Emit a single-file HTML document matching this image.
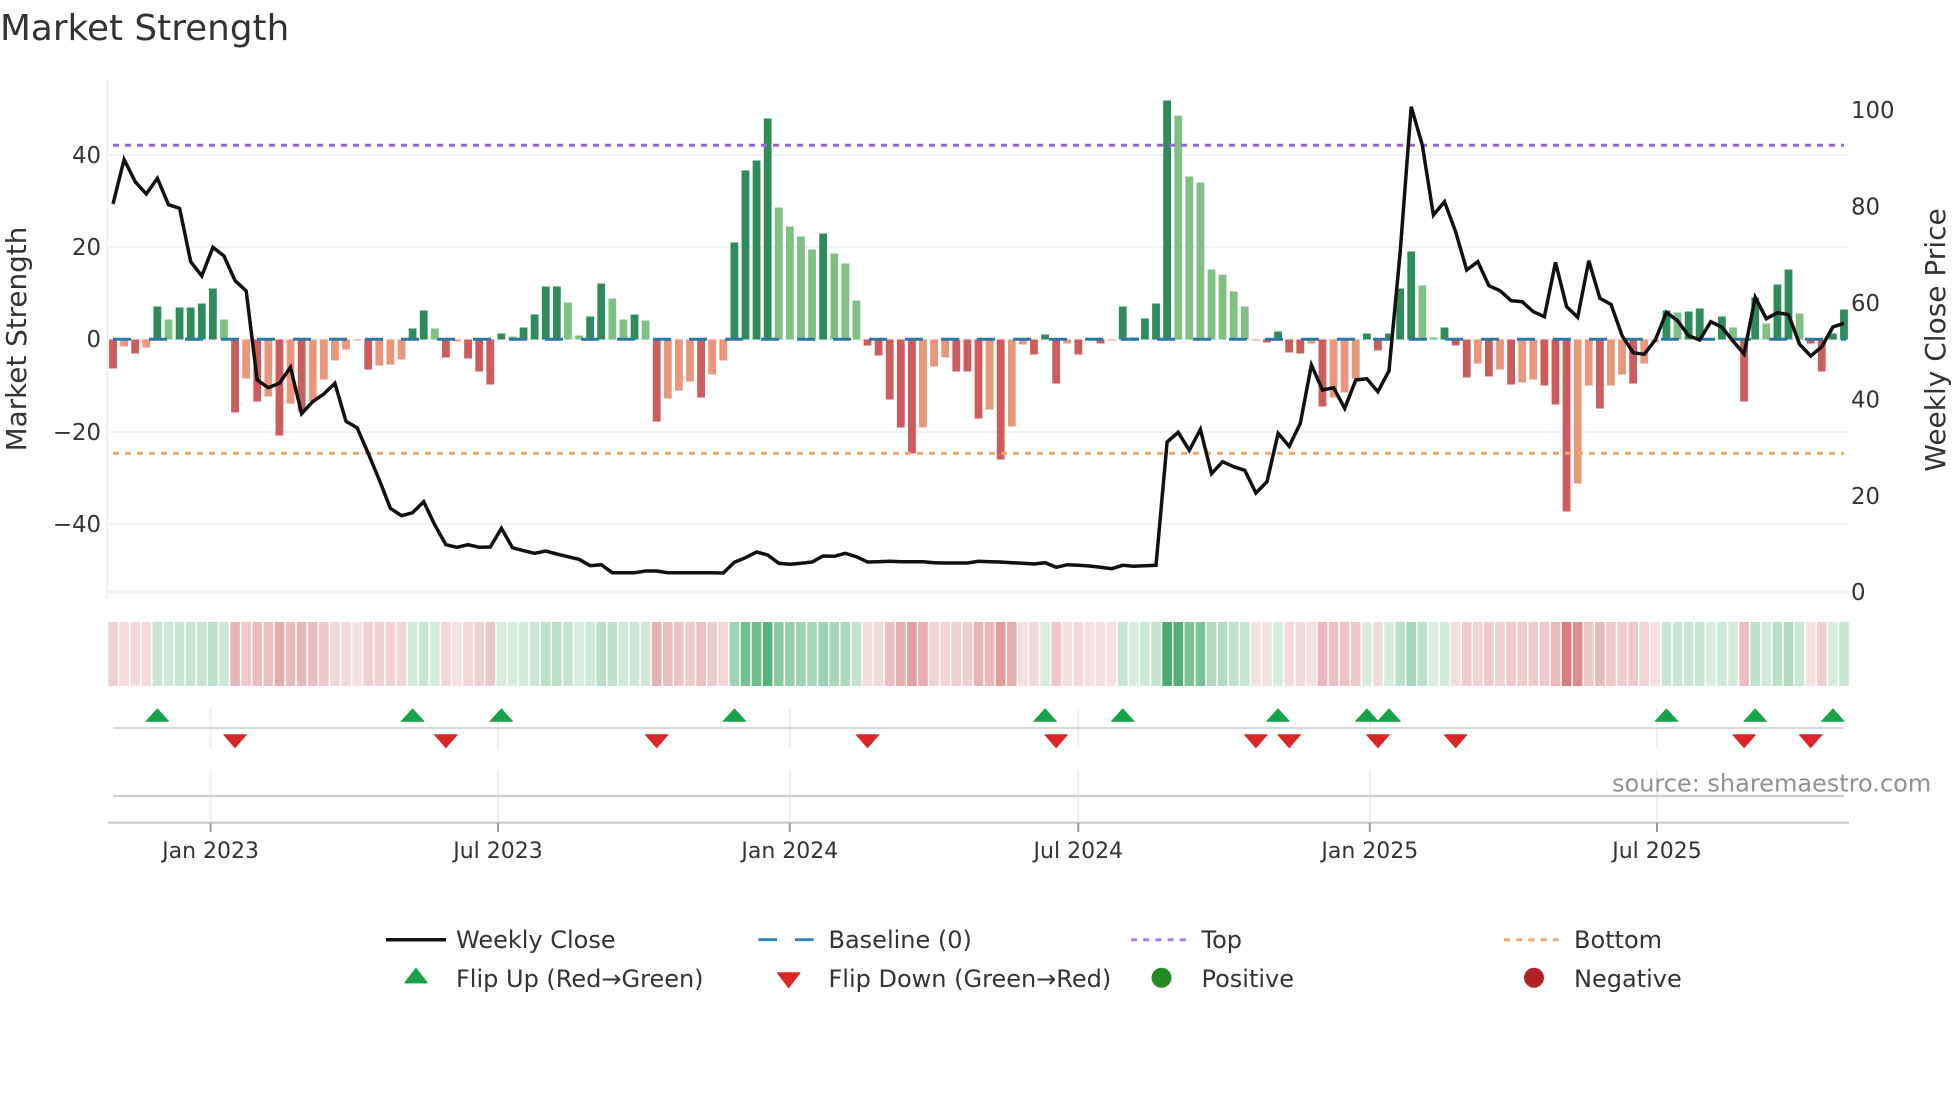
<!DOCTYPE html>
<html>
<head>
<meta charset="utf-8">
<title>Market Strength</title>
<style>
html,body{margin:0;padding:0;background:#fff;width:1960px;height:1102px;overflow:hidden}
svg{display:block;position:absolute;left:0;top:0}
text{font-family:"DejaVu Sans","Liberation Sans",sans-serif;fill:#333}
.t{font-size:22px}
.y{font-size:22.8px}
.l{font-size:24px}
</style>
</head>
<body>
<svg id="c" xmlns="http://www.w3.org/2000/svg" width="1960" height="1102" viewBox="0 0 1960 1102">
<rect width="1960" height="1102" fill="#fff"/>
<g id="strip"></g>
<g stroke-width="2" fill="none">
<path d="M107.5 80V599" stroke="#eef0f2"/>
<path d="M107 155H1849M107 247H1849M107 339.5H1849M107 432H1849M107 524H1849" stroke="#f0f2f5"/>
<path d="M107 592H1849" stroke="#eef0f9" stroke-width="2.5"/>
<path d="M210.6 708V748M498 708V748M789.8 708V748M1078.3 708V748M1369.8 708V748M1657 708V748M210.6 770V823M498 770V823M789.8 770V823M1078.3 770V823M1369.8 770V823M1657 770V823" stroke="#eef0f3"/>
</g>
<g id="bars"></g>
<path d="M113 339.3H1846" stroke="#2a78a8" stroke-width="3" stroke-dasharray="18 18" fill="none"/>
<path d="M113 145.3H1844" stroke="#9a68d2" stroke-width="3" stroke-dasharray="6 6" fill="none"/>
<path d="M113 453.3H1844" stroke="#eca76c" stroke-width="3" stroke-dasharray="6 6" fill="none"/>
<polyline id="price" fill="none" stroke="#111" stroke-width="3.5" stroke-linejoin="miter" points=""/>
<path d="M113 728H1844" stroke="#d6d9e0" stroke-width="2.2" fill="none"/>
<path d="M113 796H1844" stroke="#cfcfd2" stroke-width="2.2" fill="none"/>
<path d="M108 822.7H1849" stroke="#c9c9cd" stroke-width="2.2" fill="none"/>
<path d="M210.6 823V832M498 823V832M789.8 823V832M1078.3 823V832M1369.8 823V832M1657 823V832" stroke="#999" stroke-width="2" fill="none"/>
<g id="marks"></g>

<text x="0" y="40" font-size="35.8">Market Strength</text>
<text transform="translate(26 339) rotate(-90)" text-anchor="middle" font-size="27.8">Market Strength</text>
<text transform="translate(1945 340) rotate(-90)" text-anchor="middle" font-size="28">Weekly Close Price</text>

<g text-anchor="end">
<text class="y" x="101" y="163">40</text>
<text class="y" x="101" y="255">20</text>
<text class="y" x="101" y="347">0</text>
<text class="y" x="101" y="440">−20</text>
<text class="y" x="101" y="532">−40</text>
</g>
<text class="y" x="1851" y="118">100</text>
<text class="y" x="1851" y="214.5">80</text>
<text class="y" x="1851" y="311">60</text>
<text class="y" x="1851" y="407.5">40</text>
<text class="y" x="1851" y="504">20</text>
<text class="y" x="1851" y="600">0</text>

<g text-anchor="middle">
<text class="t" x="210.6" y="858">Jan 2023</text>
<text class="t" x="498" y="858">Jul 2023</text>
<text class="t" x="789.8" y="858">Jan 2024</text>
<text class="t" x="1078.3" y="858">Jul 2024</text>
<text class="t" x="1369.8" y="858">Jan 2025</text>
<text class="t" x="1657" y="858">Jul 2025</text>
</g>
<text x="1612" y="791.5" font-size="24" style="fill:#919191">source: sharemaestro.com</text>

<path d="M386 939.7H446" stroke="#111" stroke-width="3.5" fill="none"/>
<path d="M758.4 939.7H777M795 939.7H813.6" stroke="#2f84bd" stroke-width="2.8" fill="none"/>
<path d="M1131 939.7H1186" stroke="#ad7de8" stroke-width="3" stroke-dasharray="6 6.2" fill="none"/>
<path d="M1504 939.7H1559" stroke="#eda86e" stroke-width="3" stroke-dasharray="6 6.2" fill="none"/>
<path d="M416 968.5L405 982.8H427Z" fill="#16a34a" stroke="#16a34a" stroke-width="1.4" stroke-linejoin="round"/>
<path d="M788.7 987.5L777.7 973H799.7Z" fill="#dc2626" stroke="#dc2626" stroke-width="1.4" stroke-linejoin="round"/>
<circle cx="1161.5" cy="977.7" r="10" fill="#228b22"/>
<circle cx="1534" cy="977.7" r="10" fill="#b22222"/>
<text class="l" x="456" y="948">Weekly Close</text>
<text class="l" x="828.5" y="948">Baseline (0)</text>
<text class="l" x="1201.5" y="948">Top</text>
<text class="l" x="1574" y="948">Bottom</text>
<text class="l" x="456" y="987">Flip Up (Red→Green)</text>
<text class="l" x="828.5" y="987">Flip Down (Green→Red)</text>
<text class="l" x="1201.5" y="987">Positive</text>
<text class="l" x="1574" y="987">Negative</text>
</svg>
<script>
(function(){
var NS="http://www.w3.org/2000/svg";
var B=[-29,-7,-14,-8,33,20,32,32,36,51,20,-73,-39,-62,-57,-96,-64,-72,-62,-40,-21,-10,-1,-30,-26,-25,-20,11,29,11,-18,-2,-19,-32,-45,6,3,12,25,53,53,37,4,23,56,41,20,25,19,-82,-59,-51,-42,-58,-35,-21,97,169,179,221,132,113,103,90,106,86,76,39,-6,-16,-60,-88,-114,-88,-27,-18,-32,-32,-79,-70,-120,-87,-5,-15,5,-44,-4,-15,-1,-4,-1,33,2,21,36,239,224,163,157,70,65,48,33,-1,-3,8,-13,-14,-4,-67,-58,-53,-39,6,-11,6,51,88,54,2,12,-6,-38,-24,-37,-30,-45,-43,-40,-46,-65,-172,-144,-46,-69,-46,-35,-44,-24,-3,29,27,28,31,1,23,12,-62,42,16,55,70,26,-4,-32,6,30];
var L={};[1,3,12,14,16,18,19,20,21,22,24,25,26,31,50,51,52,54,55,73,74,75,79,81,82,86,88,90,103,108,110,111,112,123,125,127,128,132,133,135,136,138,139,5,10,29,36,41,42,45,46,48,60,61,62,63,65,66,67,96,97,98,99,100,101,102,118,119,141,146,149,152].forEach(function(i){L[i]=1});
var P=[204,159.5,181.7,194,178.3,204.7,208.3,261.7,276,247.3,256,280.7,291,380,387.7,383.3,367.3,413.7,401.7,394,383.3,421.3,427.7,453.3,480,508.3,515.7,512.7,501.7,525,544.7,547.3,544.7,547.3,547,528.3,547.7,550.7,553.3,551,554,556.7,559.3,565.7,564.7,572.7,572.7,572.7,571,571,572.7,572.7,572.7,572.7,572.7,573,562.3,557.7,552,555,563.3,564.3,563.3,562,556,556.3,553.3,556.7,562,561.7,561.3,561.7,561.7,561.7,562.7,563,563,563,561.3,561.7,562,562.7,563.3,564,562.7,567.3,564.7,565.3,566,567.3,568.7,565.3,566.3,565.7,565.3,442,432.3,450.3,429.3,473.7,461.7,466.7,470.3,493,481.7,433.3,446.3,423.3,365,390,387.7,408.3,380,378.7,391.7,370.7,253,106.7,145,215,201.7,231.7,270,261.7,285.7,290.7,300.7,301.7,311.7,316.7,262.3,306.7,317.3,260.7,298.3,304.3,335.7,352.7,354.3,340,312.3,320.7,335.7,340,321.7,327.3,341,354,297.3,318.7,312.7,314.7,344.3,356,346.7,327,323.3];
var dx=11.096,x0=113,base=339.5,w=7.8;
function el(n,a,p){var e=document.createElementNS(NS,n);for(var k in a)e.setAttribute(k,a[k]);p.appendChild(e);return e}
var gb=document.getElementById('bars'),gs=document.getElementById('strip'),gm=document.getElementById('marks');
var pts=[];
B.forEach(function(v,i){
 var cx=x0+dx*i,col;
 if(v>0)col=L[i]?'#81c084':'#2e8b5a';else col=L[i]?'#e9967a':'#cd5c5c';
 var h=Math.abs(v);
 el('rect',{x:(cx-w/2).toFixed(2),y:v>0?base-h:base,width:w,height:h,fill:col},gb);
 var a,c;
 if(v>0){a=.16+.62*h/240;c='rgba(22,150,70,'+a.toFixed(3)+')'}
 else{a=.13+.62*h/240;c='rgba(185,28,28,'+a.toFixed(3)+')'}
 el('rect',{x:(cx-4.8).toFixed(2),y:622,width:9.6,height:64,fill:c},gs);
 pts.push(cx.toFixed(1)+','+P[i]);
});
document.getElementById('price').setAttribute('points',pts.join(' '));
[4,27,35,56,84,91,105,113,115,140,148,155].forEach(function(i){
 var x=x0+dx*i;
 el('path',{d:'M'+x+' 709L'+(x-11.3)+' 721.3H'+(x+11.3)+'Z',fill:'#16a34a',stroke:'#16a34a','stroke-width':1,'stroke-linejoin':'round'},gm);
});
[11,30,49,68,85,103,106,114,121,147,153].forEach(function(i){
 var x=x0+dx*i;
 el('path',{d:'M'+x+' 747.7L'+(x-11.3)+' 734.7H'+(x+11.3)+'Z',fill:'#dc2626',stroke:'#dc2626','stroke-width':1,'stroke-linejoin':'round'},gm);
});
})();
</script>
</body>
</html>
